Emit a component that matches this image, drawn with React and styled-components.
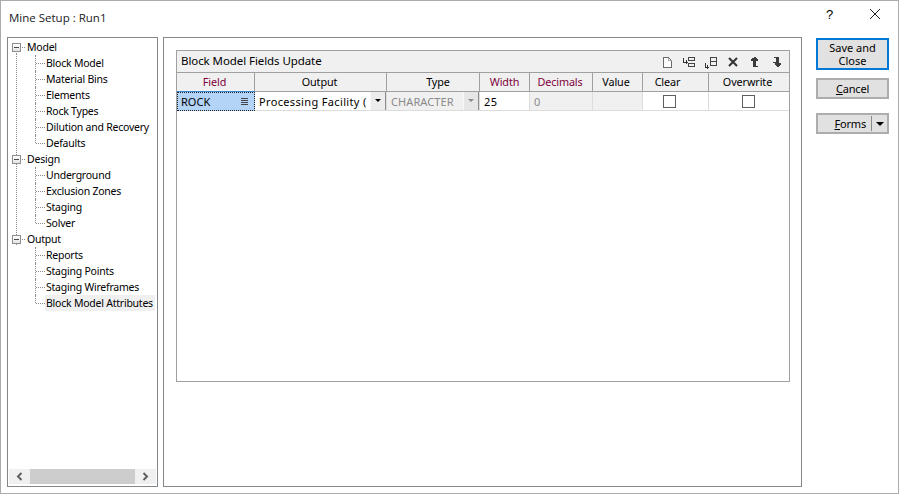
import React from "react";
import styled, { createGlobalStyle } from "styled-components";

const Global = createGlobalStyle`
  html, body { margin: 0; padding: 0; background: #fff; }
  body { font-family: "Noto Sans", "Open Sans", sans-serif; font-size: 11px; color: #000; }
`;

const Window = styled.div`
  width: 899px; height: 494px; box-sizing: border-box;
  border: 1px solid #ababab; background: #fff;
  display: flex; flex-direction: column;
`;
const TitleBar = styled.div`
  height: 36px; flex: none; display: flex; align-items: center;
  padding: 0 0 0 8px; box-sizing: border-box;
`;
const TitleText = styled.div`
  flex: 1; font-family: "Open Sans", sans-serif; font-size: 11.5px; color: #1a1a1a; position: relative; top: -2px;
`;
const CaptionButton = styled.div`
  width: 45px; height: 30px; display: flex; align-items: center; justify-content: center;
  font-family: "Liberation Sans", sans-serif; font-size: 13px; margin-top: -10px;
`;
const Caption = styled.div` display: flex; margin-right: 1px; `;
const Content = styled.div`
  flex: 1; display: flex; padding: 0 9px 6px 6px; min-height: 0;
`;
const TreePanel = styled.div`
  width: 151px; box-sizing: border-box; border: 1px solid #82878c; background: #fff;
  display: flex; flex-direction: column; padding: 1px; position: relative;
`;
const TreeList = styled.div` flex: 1; `;
const Group = styled.div`
  position: relative;
  ${p => p.$line && `
    &::before { content: ""; position: absolute; left: 7px; top: 14px; height: 192px; border-left: 1px dotted #8a8a8a; }
  `}
`;
const ParentRow = styled.div`
  height: 16px; line-height: 16px; display: flex; align-items: center; position: relative; padding-left: 3px;
`;
const Expander = styled.span`
  width: 9px; height: 9px; box-sizing: border-box; border: 1px solid #8e8f8f; background: linear-gradient(#fff, #e4e4e4);
  display: flex; align-items: center; justify-content: center; flex: none;
  &::before { content: ""; width: 5px; height: 1px; background: #4a4a4a; }
`;
const Dash = styled.span` width: 3px; border-top: 1px dotted #8a8a8a; margin: 0 2px 0 1px; flex: none; `;
const TreeLabel = styled.span` white-space: nowrap; font-size: 10.5px; letter-spacing: -0.23px; `;
const ChildList = styled.div` position: relative; `;
const ChildRow = styled.div`
  height: 16px; display: flex; align-items: center; position: relative; padding-left: 37px;
  &::before { content: ""; position: absolute; left: 26px; top: 0; height: ${p => (p.$last ? "8px" : "16px")}; border-left: 1px dotted #8a8a8a; }
  &::after { content: ""; position: absolute; left: 27px; top: 8px; width: 9px; border-top: 1px dotted #8a8a8a; }
`;
const ChildLabel = styled(TreeLabel)`
  padding: 0 2px 0 0; line-height: 16px; background: ${p => (p.$selected ? "#f0f0f0" : "transparent")};
  box-shadow: ${p => (p.$selected ? "-1px 0 0 #f0f0f0" : "none")};
`;
const HScroll = styled.div`
  height: 15px; display: flex; background: #f0f0f0; flex: none; margin: 0 0 1px 0; align-items: stretch;
`;
const ScrollArrow = styled.div` width: 21px; display: flex; align-items: center; justify-content: center; flex: none; `;
const ScrollThumb = styled.div` flex: 1; background: #cdcdcd; `;

const MainPanel = styled.div`
  width: 639px; margin-left: 5px; box-sizing: border-box; border: 1px solid #82878c;
  padding: 12px 11px 104px 12px; display: flex;
`;
const Inner = styled.div`
  flex: 1; border: 1px solid #a0a0a0; display: flex; flex-direction: column; background: #fff; min-width: 0;
`;
const GridTitle = styled.div`
  height: 21px; flex: none; background: #f0f0f0; display: flex; align-items: center; justify-content: space-between;
  padding: 0 1px 0 4px; border-bottom: 1px solid #a0a0a0; font-size: 11.5px; letter-spacing: -0.08px;
  & > span { position: relative; top: -1px; }
`;
const Tools = styled.div` display: flex; align-items: center; `;
const ToolIcon = styled.span` width: 22px; height: 14px; display: flex; justify-content: center; `;
const Table = styled.div`
  display: grid;
  grid-template-columns: 78px 132px 93px 50px 63px 50px 66px 80px;
`;
const Head = styled.div`
  background: #f0f0f0; border-right: ${p => (p.$end ? "none" : "1px solid #a0a0a0")};
  border-bottom: 1px solid ${p => (p.$active ? "#3a8ad8" : "#a0a0a0")}; display: flex; align-items: center; justify-content: center;
  color: ${p => (p.$req ? "#80003c" : "#000")}; letter-spacing: -0.1px; font-size: 10.8px; padding: 0 ${p => p.$pr || 0}px 2px ${p => p.$pl || 0}px;
  box-sizing: content-box; height: 16px;
`;
const Cell = styled.div`
  height: 19px; box-sizing: border-box; background: ${p => (p.$off ? "#f0f0f0" : "#fff")};
  border-right: ${p => (p.$end ? "none" : "1px solid #dcdcdc")}; border-bottom: 1px solid #dcdcdc;
  display: flex; align-items: center; padding-left: 4px; color: ${p => (p.$off ? "#8a8a8a" : "#000")};
  overflow: hidden; white-space: nowrap; justify-content: ${p => (p.$center ? "center" : "flex-start")};
  padding-right: ${p => p.$pr || 0}px;
`;
const FieldCell = styled(Cell)`
  background: #b3d4f7; border: 1px dotted #222; padding-left: 3px; justify-content: space-between; padding-right: 5px;
`;
const ValueText = styled.span` letter-spacing: ${p => p.$sp}px; overflow: hidden; flex: 1; `;
const ComboBtn = styled.div`
  width: 16px; height: 19px; flex: none; background: ${p => (p.$off ? "#e6e6e6" : "#ececec")};
  border-left: 1px solid #f8f8f8; border-right: 1px solid #8c8c8c; border-bottom: 1px solid #8c8c8c;
  box-sizing: border-box; display: flex; align-items: center; justify-content: center;
  &::before { content: ""; border: 3px solid transparent; border-top: 3px solid ${p => (p.$off ? "#8a8a8a" : "#000")}; border-bottom: none; }
`;
const ComboCell = styled(Cell)` padding-right: 0; `;
const Check = styled.span` width: 11px; height: 11px; border: 1px solid #5f5f5f; background: #fff; display: block; `;

const SidePanel = styled.div`
  margin-left: 14px; width: 73px; display: flex; flex-direction: column; padding-top: 1px;
`;
const PrimaryBtn = styled.div`
  height: 32px; box-sizing: border-box; border: 2px solid #0078d7; background: #e1e1e1; text-align: center; line-height: 13px;
  padding-top: 1px; font-size: 11px;
`;
const Btn = styled.div`
  height: 21px; box-sizing: border-box; border: 2px solid #adadad; background: #e1e1e1; display: flex; align-items: center; justify-content: center;
  margin-top: ${p => p.$mt}px;
`;
const FormsBtn = styled(Btn)` justify-content: flex-end; padding-right: 3px; `;
const Sep = styled.span` width: 1px; height: 15px; background: #8a8a8a; margin: 0 4px 0 5px; `;
const Caret = styled.span` border: 4px solid transparent; border-top: 4px solid #000; border-bottom: none; `;
const Key = styled.span` text-decoration: underline; `;
const ButtonLabel = styled.span` letter-spacing: -0.2px; `;

const tree = [
  ["Model", ["Block Model", "Material Bins", "Elements", "Rock Types", "Dilution and Recovery", "Defaults"], true],
  ["Design", ["Underground", "Exclusion Zones", "Staging", "Solver"], true],
  ["Output", ["Reports", "Staging Points", "Staging Wireframes", "Block Model Attributes"], false],
];

const heads = [
  { t: "Field", req: 1, active: 1, pr: 2 },
  { t: "Output", pr: 2 },
  { t: "Type", pl: 10 },
  { t: "Width", req: 1 },
  { t: "Decimals", req: 1, pr: 2 },
  { t: "Value", pr: 3 },
  { t: "Clear", pr: 16 },
  { t: "Overwrite", pr: 3 },
];

const Svg = ({ children }) => (
  <svg width="14" height="14" viewBox="0 0 14 14" fill="none" shapeRendering="crispEdges">{children}</svg>
);

export default function App() {
  return (
    <Window>
      <Global />
      <TitleBar>
        <TitleText>Mine Setup : Run1</TitleText>
        <Caption>
          <CaptionButton>?</CaptionButton>
          <CaptionButton>
            <svg width="12" height="12" viewBox="0 0 12 12" stroke="#222" strokeWidth="1"><path d="M1 1l10 10M11 1L1 11" /></svg>
          </CaptionButton>
        </Caption>
      </TitleBar>
      <Content>
        <TreePanel>
          <TreeList>
            {tree.map(([name, kids, line], gi) => (
              <Group key={name} $line={line && gi === 0}>
                <ParentRow>
                  <Expander />
                  <Dash />
                  <TreeLabel>{name}</TreeLabel>
                </ParentRow>
                <ChildList>
                  {kids.map((k, i) => (
                    <ChildRow key={k} $last={i === kids.length - 1}>
                      <ChildLabel $selected={k === "Block Model Attributes"}>{k}</ChildLabel>
                    </ChildRow>
                  ))}
                </ChildList>
              </Group>
            ))}
          </TreeList>
          <HScroll>
            <ScrollArrow>
              <svg width="7" height="9" viewBox="0 0 7 9" fill="none" stroke="#606060" strokeWidth="2"><path d="M5.5 1L2 4.5 5.5 8" /></svg>
            </ScrollArrow>
            <ScrollThumb />
            <ScrollArrow>
              <svg width="7" height="9" viewBox="0 0 7 9" fill="none" stroke="#606060" strokeWidth="2"><path d="M1.5 1L5 4.5 1.5 8" /></svg>
            </ScrollArrow>
          </HScroll>
        </TreePanel>
        <MainPanel>
          <Inner>
            <GridTitle>
              <span>Block Model Fields Update</span>
              <Tools>
                <ToolIcon><Svg>
                  <path d="M3.5 2.5h5l3 3v7h-8z" stroke="#6a6a6a" fill="#fff" />
                  <path d="M8.5 3v2.5h3" stroke="#a8a8a8" />
                </Svg></ToolIcon>
                <ToolIcon><Svg>
                  <path d="M1.5 3v4h4M4.5 5v4" stroke="#333" />
                  <path d="M6.5 2.5h6v3h-6zM6.5 8.5h6v3h-6z" stroke="#444" />
                </Svg></ToolIcon>
                <ToolIcon><Svg>
                  <path d="M1.5 8v4h3M3.5 10v4" stroke="#333" />
                  <path d="M6.5 2.5h6v8h-6zM6.5 6.5h6" stroke="#444" />
                </Svg></ToolIcon>
                <ToolIcon><Svg>
                  <path d="M3 3l8 8M11 3l-8 8" stroke="#333" strokeWidth="2" shapeRendering="auto" />
                </Svg></ToolIcon>
                <ToolIcon><Svg>
                  <path d="M6 2h2v1h1v1h1v2H8v5h2v1H5V6H3V4h1V3h2z" fill="#3c3c3c" />
                </Svg></ToolIcon>
                <ToolIcon><Svg>
                  <path d="M4 2h5v6h2v2h-1v1H9v1H7v-1H6v-1H5V8H3V7h3V3H4z" fill="#3c3c3c" />
                </Svg></ToolIcon>
              </Tools>
            </GridTitle>
            <Table>
              {heads.map((h, i) => (
                <Head key={h.t} $req={h.req} $active={h.active} $pl={h.pl} $pr={h.pr} $end={i === heads.length - 1}>{h.t}</Head>
              ))}
              <FieldCell>
                <span>ROCK</span>
                <svg width="8" height="7" viewBox="0 0 8 7" stroke="#444" shapeRendering="crispEdges"><path d="M0 .5h7M0 2.5h7M0 4.5h7M0 6.5h7" /></svg>
              </FieldCell>
              <ComboCell>
                <ValueText $sp={0.35}>Processing Facility (</ValueText>
                <ComboBtn />
              </ComboCell>
              <ComboCell $off>
                <ValueText $sp={0.1}>CHARACTER</ValueText>
                <ComboBtn $off />
              </ComboCell>
              <Cell><ValueText $sp={0.5}>25</ValueText></Cell>
              <Cell $off>0</Cell>
              <Cell $off />
              <Cell $center $pr={17}><Check /></Cell>
              <Cell $center $end $pr={6}><Check /></Cell>
            </Table>
          </Inner>
        </MainPanel>
        <SidePanel>
          <PrimaryBtn>Save and<br />Close</PrimaryBtn>
          <Btn $mt={8}><ButtonLabel><Key>C</Key>ancel</ButtonLabel></Btn>
          <FormsBtn $mt={14}>
            <ButtonLabel><Key>F</Key>orms</ButtonLabel>
            <Sep />
            <Caret />
          </FormsBtn>
        </SidePanel>
      </Content>
    </Window>
  );
}
